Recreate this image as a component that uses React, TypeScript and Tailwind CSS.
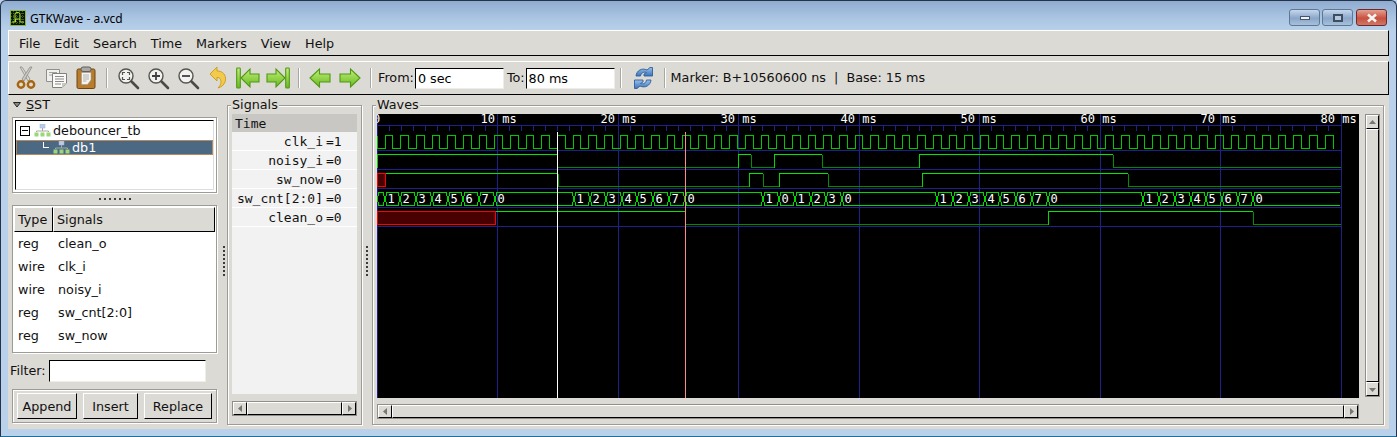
import React from "react";

const ui = "font-['DejaVu_Sans',sans-serif]";
const mono = "font-['DejaVu_Sans_Mono',monospace]";
const bevel = "border border-t-white border-l-white border-b-black border-r-black";
const etched = "border border-[#9c9b96] shadow-[inset_1px_1px_0_#fff,1px_1px_0_#fff]";

const T0 = 377;
const X_END = 1341;
const tx = (ms: number) => T0 + ms * 12.05;

function Digital({ top, segs }: { top: number; segs: [number, number][] }) {
  const hi = top + 0.5;
  const lo = top + 13.5;
  const els: React.ReactNode[] = [];
  segs.forEach(([x, v], i) => {
    const next = i + 1 < segs.length ? segs[i + 1][0] : X_END;
    const y = v ? hi : lo;
    els.push(<line key={`h${i}`} x1={x} x2={next} y1={y} y2={y} stroke={v ? "#00e800" : "#008a00"} />);
    if (i > 0) els.push(<line key={`v${i}`} x1={x + 0.5} x2={x + 0.5} y1={hi} y2={lo + 0.5} stroke={v ? "#00d800" : "#009000"} />);
  });
  return <g>{els}</g>;
}

function Clock() {
  let d = `M377.5 135.5 V148.5`;
  for (let i = 0; i < 61; i++) {
    const r = Math.round(384.5 + i * 15.67);
    const f = Math.round(392.3 + i * 15.67);
    if (r > 1341) break;
    d += ` H${r + 0.5} V135.5`;
    if (f < 1341) d += ` H${f + 0.5} V148.5`;
    else d += ` H1341`;
  }
  return <path d={d} fill="none" stroke="#00c800" />;
}

const busPoints: [number, string][] = [
  [377, ""], [385, "1"], [400, "2"], [416, "3"], [432, "4"], [447.5, "5"], [463, "6"], [478.5, "7"], [495, "0"],
  [574.3, "1"], [590, "2"], [606, "3"], [621.6, "4"], [637, "5"], [653, "6"], [669, "7"], [685, "0"],
  [763.3, "1"], [779.3, "0"], [795, "1"], [810.7, "2"], [826, "3"], [842, "0"],
  [937.3, "1"], [953, "2"], [969, "3"], [984.6, "4"], [1000, "5"], [1016, "6"], [1032, "7"], [1048, "0"],
  [1143.3, "1"], [1159, "2"], [1175, "3"], [1190.6, "4"], [1206, "5"], [1222, "6"], [1238, "7"], [1253, "0"],
];

function Bus() {
  const t = 192.5, b = 205.5, m = 199;
  return (
    <g>
      {busPoints.map(([x, label], i) => {
        const nx = i + 1 < busPoints.length ? busPoints[i + 1][0] : 1340;
        const last = i + 1 === busPoints.length;
        const a = Math.round(x);
        const c = Math.round(nx);
        const d = last
          ? `M${c} ${t} H${a + 2} L${a} ${m} L${a + 2} ${b} H${c}`
          : `M${a} ${m} L${a + 2} ${t} H${c - 2} L${c} ${m} L${c - 2} ${b} H${a + 2} Z`;
        return (
          <g key={i}>
            <path d={d} fill="none" stroke="#00d800" />
            {label && (
              <text x={a + 2.5} y={203} fontSize={12} fill="#fff" fontFamily="'DejaVu Sans Mono',monospace">
                {label}
              </text>
            )}
          </g>
        );
      })}
    </g>
  );
}

function Waves() {
  const grid = [0, 10, 20, 30, 40, 50, 60, 70, 80];
  const ticks = Array.from({ length: 81 }, (_, i) => i);
  return (
    <svg width={982} height={284} viewBox="377 114 982 284" className="block bg-black shrink-0">
      <g stroke="#20208c" shapeRendering="crispEdges">
        {[125, 150, 169, 188, 207, 226].map((y) => (
          <line key={y} x1={377} x2={1341} y1={y + 0.5} y2={y + 0.5} />
        ))}
        {grid.map((g) => {
          const x = Math.floor(tx(g)) + 0.5;
          return <line key={g} x1={x} x2={x} y1={114} y2={398} />;
        })}
        {ticks.map((t) => {
          const x = Math.floor(tx(t)) + 0.5;
          return <line key={t} x1={x} x2={x} y1={125} y2={131} />;
        })}
      </g>
      {grid.map((g) => (
        <text
          key={g}
          x={g === 0 ? 373 : 360.5 + g * 12}
          y={123}
          fontSize={12}
          fill="#fff"
          xmlSpace="preserve"
          fontFamily="'DejaVu Sans Mono',monospace"
        >
          {g === 0 ? "0" : `${g} ms`}
        </text>
      ))}
      <g shapeRendering="crispEdges">
        <Clock />
        <Digital top={154} segs={[[377, 1], [557, 0], [738, 1], [751, 0], [774, 1], [822, 0], [919, 1], [1113, 0]]} />
        <line x1={377.5} x2={377.5} y1={154} y2={168} stroke="#00d800" />
        <Digital top={173} segs={[[385, 1], [558, 0], [749, 1], [763, 0], [779, 1], [828, 0], [922, 1], [1128, 0]]} />
        <rect x={377.5} y={173.5} width={8} height={13} fill="#480000" stroke="#ff0000" />
        <Bus />
        <Digital top={211} segs={[[495, 1], [685, 0], [1048, 1], [1253, 0]]} />
        <rect x={377.5} y={211.5} width={118} height={13} fill="#480000" stroke="#ff0000" />
        <line x1={557.5} x2={557.5} y1={132} y2={398} stroke="#ffffff" />
        <line x1={685.5} x2={685.5} y1={132} y2={398} stroke="#ff8a8a" />
      </g>
    </svg>
  );
}

function Arrow({ dir }: { dir: "l" | "r" | "u" | "d" }) {
  const p = { l: "M6 1 L2 4.5 L6 8Z", r: "M3 1 L7 4.5 L3 8Z", u: "M4.5 2 L8 6 H1Z", d: "M1 3 H8 L4.5 7Z" }[dir];
  return (
    <svg width={9} height={9} viewBox="0 0 9 9">
      <path d={p} fill="#77766f" />
    </svg>
  );
}

function HScroll({ className }: { className: string }) {
  return (
    <div className={`flex h-[15px] bg-[#c4c2bc] border border-[#8f8e88] ${className}`}>
      <div className={`w-[14px] flex items-center justify-center bg-[#dcdad5] ${bevel}`}><Arrow dir="l" /></div>
      <div className={`flex-1 bg-[#dcdad5] ${bevel}`} />
      <div className={`w-[14px] flex items-center justify-center bg-[#dcdad5] ${bevel}`}><Arrow dir="r" /></div>
    </div>
  );
}

function VScroll() {
  return (
    <div className="flex flex-col w-[15px] h-[283px] bg-[#c4c2bc] border border-[#8f8e88]">
      <div className={`h-[14px] flex items-center justify-center bg-[#dcdad5] ${bevel}`}><Arrow dir="u" /></div>
      <div className={`flex-1 bg-[#dcdad5] ${bevel}`} />
      <div className={`h-[14px] flex items-center justify-center bg-[#dcdad5] ${bevel}`}><Arrow dir="d" /></div>
    </div>
  );
}

function Grip({ mt }: { mt: string }) {
  return (
    <div className={`w-[2px] flex flex-col gap-[2px] ${mt}`}>
      {Array.from({ length: 8 }).map((_, i) => (
        <div key={i} className="w-[2px] h-[2px] bg-[#3c3c3a]" />
      ))}
    </div>
  );
}

const Sep = () => <div className="w-px h-[20px] bg-[#a8a7a2] border-r border-white box-content mx-[5px]" />;

function Mag({ inner }: { inner: React.ReactNode }) {
  return (
    <svg width={24} height={24} viewBox="0 0 24 24">
      <circle cx={10} cy={10} r={7} fill="#f2f2f0" stroke="#55554f" strokeWidth={1.4} />
      <path d="M15.5 15.5 L22 22" stroke="#4a4a46" strokeWidth={2.6} strokeLinecap="round" />
      {inner}
    </svg>
  );
}

const IconCut = () => (
  <svg width={22} height={24} viewBox="0 0 22 24">
    <path d="M5 1 L13 15 L15 13 L7 1Z" fill="#d6d6d2" stroke="#8d8d88" strokeWidth={0.8} />
    <path d="M17 1 L9 15 L7 13 L15 1Z" fill="#c8c8c4" stroke="#8d8d88" strokeWidth={0.8} />
    <circle cx={6} cy={18.5} r={3.2} fill="none" stroke="#a8650f" strokeWidth={2.4} />
    <circle cx={16} cy={18.5} r={3.2} fill="none" stroke="#a8650f" strokeWidth={2.4} />
  </svg>
);

const IconCopy = () => (
  <svg width={24} height={24} viewBox="0 0 24 24">
    <path d="M2.5 3.5 H15.5 V15.5 H2.5Z" fill="#f0f0ee" stroke="#8f8f8b" />
    <path d="M5 6.5 H13 M5 9 H8" stroke="#a0a09c" />
    <path d="M8.5 7.5 H22.5 L22.5 17 L18 21.5 H8.5Z" fill="#fafaf8" stroke="#80807c" />
    <path d="M11 10.5 H20 M11 13 H20 M11 15.5 H20 M11 18 H17" stroke="#8a8a86" />
    <path d="M18 21.5 V17 H22.5Z" fill="#c8c8c4" />
  </svg>
);

const IconPaste = () => (
  <svg width={20} height={24} viewBox="0 0 20 24">
    <rect x={1} y={3} width={18} height={19.5} rx={1.5} fill="#b97b2c" stroke="#6e4710" />
    <rect x={5} y={1} width={10} height={4.5} rx={2} fill="#a9a9a5" stroke="#5f5f5b" />
    <path d="M5.5 6.5 H15 V14 L11.5 18.5 H5.5Z" fill="#f4f4f2" stroke="#9a9a94" strokeWidth={0.6} />
    <path d="M7 9 H13 M7 11 H13 M7 13 H13 M7 15 H10.5" stroke="#a0a09c" strokeWidth={0.8} />
  </svg>
);

const corners = (
  <path d="M6.5 9 V6.5 H9 M11 6.5 H13.5 V9 M13.5 11 V13.5 H11 M9 13.5 H6.5 V11" fill="none" stroke="#55554f" strokeWidth={1.2} />
);
const plus = <path d="M6 10 H14 M10 6 V14" stroke="#404040" strokeWidth={1.8} />;
const minus = <path d="M6 10 H14" stroke="#404040" strokeWidth={1.8} />;

const IconUndo = () => (
  <svg width={18} height={24} viewBox="0 0 18 24">
    <path d="M1 8 L8 1 V5 C14 5 17 9 16.5 14 C16 18 13 21 9 22 C12 19 12.5 16 11.5 13.5 C11 12 9.5 11.5 8 11.5 V15Z" fill="#f3cb4a" stroke="#c9981a" strokeWidth={0.9} />
  </svg>
);

function GreenDefs() {
  return (
    <svg width={0} height={0} className="absolute">
      <defs>
        <linearGradient id="grn" x1="0" y1="0" x2="0" y2="1">
          <stop offset="0" stopColor="#c4ec86" />
          <stop offset="0.5" stopColor="#94d44a" />
          <stop offset="1" stopColor="#6cb62c" />
        </linearGradient>
        <linearGradient id="blu" x1="0" y1="0" x2="0" y2="1">
          <stop offset="0" stopColor="#9cc0ea" />
          <stop offset="1" stopColor="#3a74b8" />
        </linearGradient>
      </defs>
    </svg>
  );
}

const G = { fill: "url(#grn)", stroke: "#4f9a12", strokeWidth: 1.1 };

const IconFirst = () => (
  <svg width={24} height={22} viewBox="0 0 24 22">
    <rect x={0.7} y={1} width={3.6} height={20} rx={0.8} {...G} />
    <path d="M5 11 L14 2 V7 H23 V15 H14 V20Z" {...G} />
  </svg>
);
const IconLast = () => (
  <svg width={24} height={22} viewBox="0 0 24 22">
    <rect x={19.7} y={1} width={3.6} height={20} rx={0.8} {...G} />
    <path d="M19 11 L10 2 V7 H1 V15 H10 V20Z" {...G} />
  </svg>
);
const IconLeft = () => (
  <svg width={22} height={20} viewBox="0 0 22 20">
    <path d="M1 10 L10.5 1 V6 H21 V14 H10.5 V19Z" {...G} />
  </svg>
);
const IconRight = () => (
  <svg width={22} height={20} viewBox="0 0 22 20">
    <path d="M21 10 L11.5 1 V6 H1 V14 H11.5 V19Z" {...G} />
  </svg>
);

const IconReload = () => (
  <svg width={21} height={24} viewBox="0 0 21 24">
    <path d="M3 10 C3.5 4.5 9 1.5 14 4 L17 1.5 L19.5 1.5 V10 H11 L11 8 L13.5 6.5 C10.5 5.5 8 7 7.5 10Z" fill="url(#blu)" stroke="#2f5f9c" strokeWidth={0.9} />
    <path d="M18 14 C17.5 19.5 12 22.5 7 20 L4 22.5 L1.5 22.5 V14 H10 L10 16 L7.5 17.5 C10.5 18.5 13 17 13.5 14Z" fill="url(#blu)" stroke="#2f5f9c" strokeWidth={0.9} />
  </svg>
);

const IconApp = () => (
  <svg width={16} height={16} viewBox="0 0 16 16" className="shrink-0">
    <rect x={0.5} y={0.5} width={15} height={15} fill="#0c1006" stroke="#8db83c" />
    <path d="M1 3.5 H15 M1 6.5 H15 M1 9.5 H15 M1 12.5 H15 M3.5 1 V15 M6.5 1 V15 M9.5 1 V15 M12.5 1 V15" stroke="#4e7a1e" strokeWidth={0.8} strokeDasharray="1 1" fill="none" />
    <path d="M2 12 H5 V4 Q5 2.5 7 2.5 H8 Q10 2.5 10 4 V12 H14 M5.5 12 V9 H10" stroke="#a4e23a" strokeWidth={1} fill="none" />
  </svg>
);

const IconTree = () => (
  <svg width={17} height={13} viewBox="0 0 17 13" className="shrink-0">
    <rect x={6} y={0} width={5} height={4} fill="#b9cde8" stroke="#9ab4d4" strokeWidth={0.5} />
    <path d="M8.5 4 V7 M2.5 8 V7 H14.5 V8" stroke="#a8a8a2" fill="none" />
    <rect x={0.5} y={8.5} width={4} height={4} fill="#9ad67a" />
    <rect x={6.5} y={8.5} width={4} height={4} fill="#9ad67a" />
    <rect x={12.5} y={8.5} width={4} height={4} fill="#9ad67a" />
  </svg>
);

const IconBtn = ({ children }: { children: React.ReactNode }) => (
  <div className="w-[30px] h-[24px] flex items-center justify-center shrink-0">{children}</div>
);

const signalsList = [
  ["reg", "clean_o"],
  ["wire", "clk_i"],
  ["wire", "noisy_i"],
  ["reg", "sw_cnt[2:0]"],
  ["reg", "sw_now"],
];

const sigValues = [
  ["clk_i", "=1"],
  ["noisy_i", "=0"],
  ["sw_now", "=0"],
  ["sw_cnt[2:0]", "=0"],
  ["clean_o", "=0"],
];

const menus = ["File", "Edit", "Search", "Time", "Markers", "View", "Help"];

function TextField({ value, w, ml }: { value: string; w: string; ml?: string }) {
  return (
    <input
      readOnly
      value={value}
      className={`${w} ${ml ?? ""} h-[21px] px-[2px] bg-white text-[12.75px] text-black outline-none border border-t-black border-l-black border-b-[#eeede9] border-r-[#eeede9] ${ui}`}
    />
  );
}

function WinBtn({ bg, w, children }: { bg: string; w: string; children: React.ReactNode }) {
  return (
    <div className={`${w} h-[17px] rounded-[3px] border flex items-center justify-center ${bg}`}>{children}</div>
  );
}

export default function App() {
  return (
    <div className={`relative w-[1397px] h-[437px] overflow-hidden bg-[#b9d1ea] text-[12.75px] text-[#111] ${ui}`}>
      <GreenDefs />
      <div className="flex flex-col h-full rounded-t-[6px] border border-[#23344a] border-b-[#1f6f96] bg-[linear-gradient(180deg,#8facd0_0px,#a9c4e2_16px,#b9d1ea_30px)]">
        {/* title */}
        <div className="h-[29px] shrink-0 flex items-center pl-[9px] pr-[9px] pt-[5px]">
          <IconApp />
          <span className="ml-[4px] mt-[1px] text-[12px] text-black font-['Noto_Sans',sans-serif]">GTKWave - a.vcd</span>
          <div className="ml-auto flex gap-[2px] mb-[1px]">
            <WinBtn w="w-[31px]" bg="border-[#5e7894] bg-[linear-gradient(180deg,#c5d7ec,#8aa6c8_55%,#a7c0dc)]">
              <div className="w-[10px] h-[4px] bg-[#eef2f6] border border-[#46566a]" />
            </WinBtn>
            <WinBtn w="w-[31px]" bg="border-[#5e7894] bg-[linear-gradient(180deg,#c5d7ec,#8aa6c8_55%,#a7c0dc)]">
              <div className="w-[10px] h-[8px] bg-[#b8c8dc] border-2 border-[#3e4e62]" />
            </WinBtn>
            <WinBtn w="w-[31px] ml-[1px]" bg="border-[#6e2a2a] bg-[linear-gradient(180deg,#e4a092,#c8503e_55%,#d07868)]">
              <svg width={12} height={10} viewBox="0 0 12 10">
                <path d="M2 1.5 L10 8.5 M10 1.5 L2 8.5" stroke="#f4f4f2" strokeWidth={2.6} />
              </svg>
            </WinBtn>
          </div>
        </div>

        {/* client area */}
        <div className="mx-[7px] h-[399px] shrink-0 bg-[#dcdad5] flex flex-col">
          <div className={`h-[26px] shrink-0 flex items-center pl-[10px] pt-[1px] gap-[14px] ${bevel}`}>
            {menus.map((m) => (
              <span key={m}>{m}</span>
            ))}
          </div>
          <div className={`mt-[5px] h-[34px] shrink-0 flex items-center pl-[2px] ${bevel}`}>
            <IconBtn><IconCut /></IconBtn>
            <IconBtn><IconCopy /></IconBtn>
            <IconBtn><IconPaste /></IconBtn>
            <Sep />
            <IconBtn><Mag inner={corners} /></IconBtn>
            <IconBtn><Mag inner={plus} /></IconBtn>
            <IconBtn><Mag inner={minus} /></IconBtn>
            <IconBtn><IconUndo /></IconBtn>
            <IconBtn><IconFirst /></IconBtn>
            <IconBtn><IconLast /></IconBtn>
            <Sep />
            <IconBtn><IconLeft /></IconBtn>
            <IconBtn><IconRight /></IconBtn>
            <Sep />
            <span className="ml-[1px]">From:</span>
            <TextField value="0 sec" w="w-[89px]" ml="ml-px" />
            <span className="ml-[3px]">To:</span>
            <TextField value="80 ms" w="w-[89px]" ml="ml-px" />
            <Sep />
            <div className="ml-[2px]"><IconBtn><IconReload /></IconBtn></div>
            <Sep />
            <span className="whitespace-pre">Marker: B+10560600 ns  |  Base: 15 ms</span>
          </div>

          {/* panes */}
          <div className="flex-1 flex min-h-0">
            {/* SST */}
            <div className="w-[213px] shrink-0 pl-[4px] flex flex-col">
              <div className="h-[22px] flex items-center gap-[5px] pb-[3px]">
                <svg width={8} height={6} viewBox="0 0 8 6" className="ml-px">
                  <path d="M0.5 0.5 H7.5 L4 5Z" fill="#8a8a86" stroke="#222" />
                </svg>
                <span><u>S</u>ST</span>
              </div>
              <div className={`w-[205px] h-[76px] bg-white p-[2px] ${etched}`}>
                <div className="w-full h-full border border-t-black border-l-black border-b-[#ddd] border-r-[#ddd] flex flex-col">
                  <div className="h-[19px] flex items-center pl-[4px]">
                    <div className="w-[10px] h-[10px] border border-black flex items-center justify-center mr-[4px]">
                      <div className="w-[6px] h-px bg-black" />
                    </div>
                    <IconTree />
                    <span className="ml-[2px]">debouncer_tb</span>
                  </div>
                  <div className="h-[15px] bg-[#4b6983] border border-[#b58a5e] flex items-center text-white">
                    <div className="ml-[26px] w-[6px] h-[6px] border-l border-b -mt-[6px] border-l-white border-b-white" />
                    <div className="ml-[4px]"><IconTree /></div>
                    <span className="ml-[2px]">db1</span>
                  </div>
                </div>
              </div>
              <div className="h-[12px] flex items-center justify-center gap-[3px] w-[205px]">
                {Array.from({ length: 7 }).map((_, i) => (
                  <div key={i} className="w-[2px] h-[2px] bg-[#3c3c3a]" />
                ))}
              </div>
              <div className={`w-[205px] h-[148px] bg-white p-px ${etched}`}>
                <div className="flex h-[25px] bg-[#dcdad5]">
                  <div className={`w-[39px] flex items-center pl-[3px] ${bevel}`}>Type</div>
                  <div className={`flex-1 flex items-center pl-[3px] ${bevel}`}>Signals</div>
                </div>
                <div className="flex flex-col">
                  {signalsList.map(([t, n]) => (
                    <div key={n} className="h-[23px] flex items-center">
                      <span className="w-[40px] pl-[4px]">{t}</span>
                      <span className="pl-[4px]">{n}</span>
                    </div>
                  ))}
                </div>
              </div>
              <div className="h-[36px] flex items-center -ml-[2px]">
                <span>Filter:</span>
                <input readOnly className="ml-[3px] w-[157px] h-[22px] bg-white outline-none border border-t-black border-l-black border-b-[#eeede9] border-r-[#eeede9]" />
              </div>
              <div className={`w-[205px] h-[34px] flex items-center pl-[4px] gap-[6px] ${etched}`}>
                <div className={`w-[60px] h-[26px] pt-px flex items-center justify-center ${bevel}`}>Append</div>
                <div className={`w-[55px] h-[26px] pt-px flex items-center justify-center ${bevel}`}>Insert</div>
                <div className={`w-[68px] h-[26px] pt-px flex items-center justify-center ${bevel}`}>Replace</div>
              </div>
            </div>

            {/* grip */}
            <div className="w-[6px] shrink-0 flex justify-center"><Grip mt="mt-[151px]" /></div>

            {/* Signals */}
            <div className={`relative w-[135px] h-[320px] mt-[10px] shrink-0 ${etched} px-[4px] pt-[8px] flex flex-col`}>
              <span className="absolute -top-[9px] left-[3px] px-px bg-[#dcdad5] leading-[16px]">Signals</span>
              <div className="h-[280px] bg-[#f2f2f2] shrink-0">
                <div className={`h-[18px] bg-[#c8c7c3] flex items-center pl-[3px] pt-px text-[13px] ${mono}`}>Time</div>
                {sigValues.map(([n, v]) => (
                  <div key={n} className={`h-[19px] flex items-center pt-px text-[13px] border-b border-white ${mono}`}>
                    <span className="w-[91px] text-right">{n}</span>
                    <span className="ml-[3px]">{v}</span>
                  </div>
                ))}
              </div>
              <HScroll className="mt-[7px] w-[125px]" />
            </div>

            {/* grip */}
            <div className="w-[10px] shrink-0 flex justify-center"><Grip mt="mt-[151px]" /></div>

            {/* Waves */}
            <div className={`relative w-[1012px] h-[320px] mt-[10px] shrink-0 ${etched} pl-[4px] pt-[8px]`}>
              <span className="absolute -top-[9px] left-[3px] px-px bg-[#dcdad5] leading-[16px]">Waves</span>
              <div className="flex">
                <Waves />
                <div className="ml-[6px]"><VScroll /></div>
              </div>
              <HScroll className="mt-[6px] w-[982px]" />
            </div>
          </div>
        </div>
      </div>
    </div>
  );
}
